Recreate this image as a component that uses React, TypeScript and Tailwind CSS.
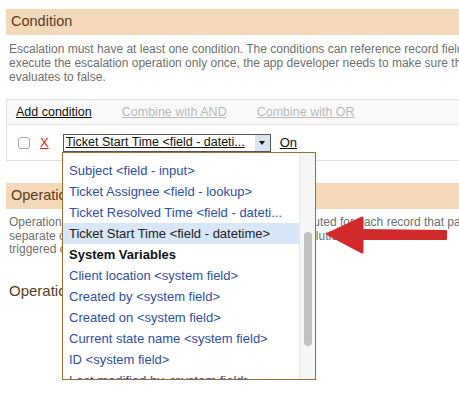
import React from 'react'

const fields = [
  { label: 'Subject <field - input>' },
  { label: 'Ticket Assignee <field - lookup>' },
  { label: 'Ticket Resolved Time <field - dateti...' },
  { label: 'Ticket Start Time <field - datetime>', active: true },
  { label: 'System Variables', group: true },
  { label: 'Client location <system field>' },
  { label: 'Created by <system field>' },
  { label: 'Created on <system field>' },
  { label: 'Current state name <system field>' },
  { label: 'ID <system field>' },
  { label: 'Last modified by <system field>' },
]

function FieldMenu() {
  return (
    <div className="absolute left-[62px] top-[152px] w-[254px] h-[228px] border border-[#9c6b30] bg-white flex overflow-hidden">
      <ul className="flex-1 pt-[7px]">
        {fields.map((f) => (
          <li
            key={f.label}
            className={
              'h-[21px] pl-[6px] flex items-center whitespace-nowrap text-[13px] ' +
              (f.active ? 'bg-[#d8e6f7] text-[#222] ' : '') +
              (f.group ? 'font-bold text-[#111] ' : '') +
              (!f.active && !f.group ? 'text-[#2f4ea8]' : '')
            }
          >
            {f.label}
          </li>
        ))}
      </ul>
      {/* scrollbar */}
      <div className="relative w-[16px] bg-[#f6f6f6] border-l border-[#e6e6e6]">
        <div className="absolute left-[4px] top-[79px] w-[8px] h-[114px] rounded-full bg-[#c2c2c2]" />
      </div>
    </div>
  )
}

function Arrow() {
  return (
    <svg className="absolute left-[320px] top-[212px]" width="132" height="46" viewBox="0 0 132 46">
      <path
        d="M40 18 L126 19 L126 27 L40 27 Z"
        fill="#d22a2c"
        stroke="#d22a2c"
        strokeWidth="2"
        strokeLinejoin="round"
      />
      <path d="M8 22 L42 6 L42 40 Z" fill="#d22a2c" stroke="#d22a2c" strokeWidth="3" strokeLinejoin="round" />
    </svg>
  )
}

export default function App() {
  return (
    <div className="relative w-[459px] h-[400px] overflow-hidden bg-white font-['Liberation_Sans',Arial,sans-serif]">
      <div className="w-[640px] pl-[6px] pt-[9px]">
        {/* Condition section */}
        <div className="h-[26px] bg-[#f3d9b9] pl-[5px] flex items-center text-[14.5px] text-[#5b3b1d]">Condition</div>
        <p className="mt-[7px] pl-[3px] text-[12px] leading-[14px] text-[#6f6f6f] whitespace-nowrap">
          Escalation must have at least one condition. The conditions can reference record fields. To
          <br />
          execute the escalation operation only once, the app developer needs to make sure the condition
          <br />
          evaluates to false.
        </p>

        <div className="mt-[15px] border border-[#dedede]">
          <div className="h-[25px] bg-[#f9f9f9] border-b border-[#e2e2e2] pl-[9px] flex items-center gap-[30px] text-[12.5px]">
            <span className="underline text-[#111]">Add condition</span>
            <span className="underline text-[#bbb]">Combine with AND</span>
            <span className="underline text-[#bbb]">Combine with OR</span>
          </div>
          <div className="h-[35px] flex items-center pl-[11px]">
            <span className="w-[12px] h-[12px] rounded-[3px] border border-[#aaa] bg-white" />
            <span className="ml-[10px] text-[13px] text-[#e02222] underline">X</span>
            <div className="ml-[14px] w-[208px] h-[18px] border border-[#555] bg-white flex items-center">
              <span className="flex-1 pl-[2px] text-[12.5px] text-[#111] underline whitespace-nowrap overflow-hidden">
                Ticket Start Time &lt;field - dateti...
              </span>
              <span className="w-[15px] h-full bg-[#d9e4f3] flex items-center justify-center">
                <span className="w-0 h-0 border-l-[3px] border-r-[3px] border-t-[4px] border-l-transparent border-r-transparent border-t-[#111]" />
              </span>
            </div>
            <span className="ml-[9px] text-[13px] text-[#111] underline">On</span>
          </div>
        </div>

        {/* Operations section */}
        <div className="mt-[22px] h-[26px] bg-[#f3d9b9] pl-[5px] flex items-center text-[14.5px] text-[#5b3b1d]">Operations</div>
        <p className="mt-[7px] pl-[3px] text-[12px] leading-[13.5px] text-[#6f6f6f] whitespace-nowrap">
          Operations define the escalation's actions. They are executed for each record that passes the conditions.
          <br />
          separate operations per condition are needed. Ticket resolutions often use tasks
          <br />
          triggered on state change.
        </p>
        <div className="mt-[23px] pl-[3px] text-[15px] text-[#5b3b1d]">Operations</div>
      </div>

      <FieldMenu />
      <Arrow />
    </div>
  )
}
